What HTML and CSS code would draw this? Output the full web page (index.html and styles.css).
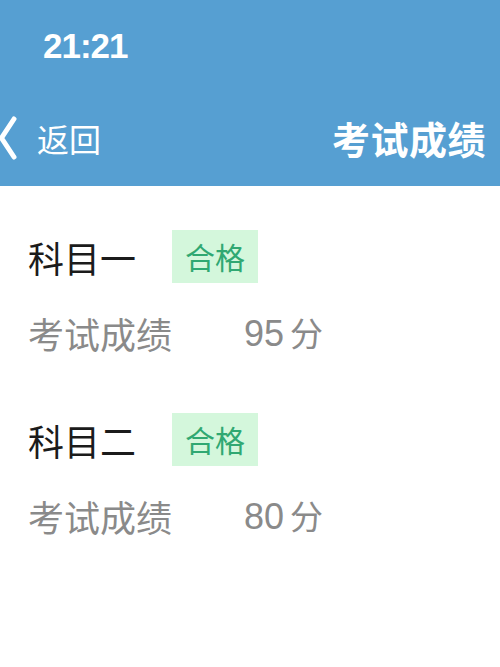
FILE: index.html
```html
<!DOCTYPE html>
<html lang="zh-CN">
<head>
<meta charset="utf-8">
<link rel="stylesheet" href="styles.css">
</head>
<body>
<header class="header">
  <div class="status"><span class="time">21:21</span></div>
  <div class="nav">
    <div class="back">
      <svg class="chev" width="18" height="44" viewBox="0 0 18 44"><path d="M15 3 L2.5 22 L15 41" fill="none" stroke="#fff" stroke-width="5" stroke-linecap="round" stroke-linejoin="round"/></svg>
      <span class="back-text">返回</span>
    </div>
    <div class="title">考试成绩</div>
  </div>
</header>
<main class="content">
  <section class="block">
    <div class="row-title"><span class="subject">科目一</span><span class="badge">合格</span></div>
    <div class="row-score"><span class="label">考试成绩</span><span class="score">95<span class="unit">分</span></span></div>
  </section>
  <section class="block">
    <div class="row-title"><span class="subject">科目二</span><span class="badge">合格</span></div>
    <div class="row-score"><span class="label">考试成绩</span><span class="score">80<span class="unit">分</span></span></div>
  </section>
</main>
</body>
</html>
```
FILE: styles.css
```css
* { box-sizing: border-box; }
html, body { margin: 0; padding: 0; background: #fff; }
body { font-family: "Noto Sans CJK SC", "Noto Sans", sans-serif; width: 500px; }
.header { background: #569fd2; height: 186px; color: #fff; display: flex; flex-direction: column; }
.status { height: 92px; display: flex; align-items: center; padding-left: 43px; }
.time { font-family: "Liberation Sans", Arial, sans-serif; font-weight: bold; font-size: 35px; letter-spacing: -1px; }
.nav { height: 94px; display: flex; align-items: center; justify-content: space-between; padding-right: 14px; padding-bottom: 2px; }
.back { display: flex; align-items: center; }
.chev { display: block; margin-left: -1px; }
.back-text { font-size: 32px; line-height: 40px; margin-left: 20px; }
.title { font-size: 38px; font-weight: bold; line-height: 44px; letter-spacing: 0.5px; }
.content { padding: 44px 0 0 28px; display: flex; flex-direction: column; gap: 55px; }
.block { display: flex; flex-direction: column; gap: 25px; }
.row-title { display: flex; align-items: center; height: 53px; }
.subject { font-size: 36px; line-height: 44px; color: #1b1b1b; width: 144px; }
.badge { background: #d4f7dc; color: #30a872; font-size: 30px; line-height: 53px; height: 53px; padding: 0 13px; }
.row-score { display: flex; align-items: center; height: 50px; color: #8a8a8a; }
.label { font-size: 36px; line-height: 50px; width: 216px; }
.score { font-family: "Liberation Sans", Arial, sans-serif; font-size: 36px; line-height: 50px; }
.unit { font-family: "Noto Sans CJK SC", sans-serif; font-size: 33px; margin-left: 6px; }
```
